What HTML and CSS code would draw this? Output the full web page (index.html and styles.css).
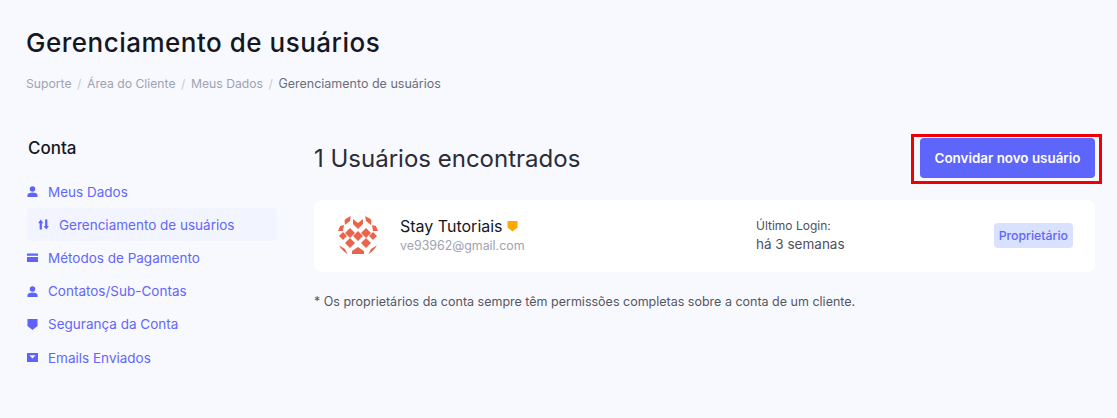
FILE: index.html
```html
<!DOCTYPE html>
<html lang="pt-BR">
<head>
    <meta charset="UTF-8">
    <meta name="viewport" content="width=device-width, initial-scale=1.0">
    <title>Gerenciamento de usuários</title>
    <link rel="stylesheet" href="styles.css">
</head>
<body>
    <!-- Page title and breadcrumb -->
    <header class="page-header">
        <h1>Gerenciamento de usuários</h1>
        <nav class="breadcrumb">
            <a href="#">Suporte</a><span class="sep">/</span>
            <a href="#">Área do Cliente</a><span class="sep">/</span>
            <a href="#">Meus Dados</a><span class="sep">/</span>
            <span class="current">Gerenciamento de usuários</span>
        </nav>
    </header>

    <div class="layout">
        <!-- Sidebar -->
        <aside class="sidebar">
            <h2>Conta</h2>
            <ul class="side-menu">
                <li>
                    <a href="#">
                        <svg class="icon" viewBox="0 0 12 12"><circle cx="6" cy="3.2" r="3"/><path d="M0.5 12V9.8C0.5 8 3 7 6 7s5.5 1 5.5 2.8V12z"/></svg>
                        Meus Dados
                    </a>
                </li>
                <li class="active">
                    <a href="#">
                        <svg class="icon" viewBox="0 0 12 12"><path d="M3 0.5 5.9 4.5H4.2v7H1.8v-7H0.1zM9 11.5 6.1 7.5h1.7v-7h2.4v7h1.7z"/></svg>
                        Gerenciamento de usuários
                    </a>
                </li>
                <li>
                    <a href="#">
                        <svg class="icon" viewBox="0 0 12 12"><path d="M0 1.5h12V4H0zM0 5.5h12V11H0z"/></svg>
                        Métodos de Pagamento
                    </a>
                </li>
                <li>
                    <a href="#">
                        <svg class="icon" viewBox="0 0 12 12"><circle cx="6" cy="3.2" r="3"/><path d="M0.5 12V9.8C0.5 8 3 7 6 7s5.5 1 5.5 2.8V12z"/></svg>
                        Contatos/Sub-Contas
                    </a>
                </li>
                <li>
                    <a href="#">
                        <svg class="icon" viewBox="0 0 12 12"><path d="M0.5 0h11v7.5L6 12 0.5 7.5z"/></svg>
                        Segurança da Conta
                    </a>
                </li>
                <li>
                    <a href="#">
                        <svg class="icon" viewBox="0 0 12 12"><path fill-rule="evenodd" d="M0 1h12v10H0zM2.5 3.5 6 7l3.5-3.5z"/></svg>
                        Emails Enviados
                    </a>
                </li>
            </ul>
        </aside>

        <!-- Users -->
        <main class="content">
            <div class="content-top">
                <h2>1 Usuários encontrados</h2>
                <div class="invite">
                    <button type="button">Convidar novo usuário</button>
                    <span class="highlight"></span>
                </div>
            </div>

            <div class="user-card">
                <svg class="avatar" viewBox="0 0 42 42">
                    <defs><clipPath id="avatarClip"><circle cx="21" cy="21" r="21"/></clipPath></defs>
                    <g clip-path="url(#avatarClip)">
                        <!-- checker of diamonds -->
                        <path d="M21 16 26 21 21 26 16 21z"/>
                        <path d="M13 13 18 18 13 23 8 18z"/>
                        <path d="M29 13 34 18 29 23 24 18z"/>
                        <path d="M13 23 18 28 13 33 8 28z"/>
                        <path d="M29 23 34 28 29 33 24 28z"/>
                        <path d="M6 17 10 21 6 25 2 21z"/>
                        <path d="M36 17 40 21 36 25 32 21z"/>
                        <!-- top crown -->
                        <path d="M16 4 21 8 26 4 26 9 21 14 16 9z"/>
                        <!-- upper wedges -->
                        <path d="M7 0H14L13 6 8 10z"/>
                        <path d="M35 0H28L29 6 34 10z"/>
                        <path d="M3 11 7 10 6 16 1 16z"/>
                        <path d="M39 11 35 10 36 16 41 16z"/>
                        <!-- bottom -->
                        <path d="M15 36 21 32 27 36 27 39H15z"/>
                        <path d="M0 29 8 34 12 42H3z"/>
                        <path d="M42 29 34 34 30 42H39z"/>
                    </g>
                </svg>
                <div class="user-info">
                    <div class="user-name">
                        Stay Tutoriais
                        <svg class="badge-icon" viewBox="0 0 12 12"><path d="M0.5 0.5h11v7L6 12 0.5 7.5z"/></svg>
                    </div>
                    <div class="user-email">ve93962@gmail.com</div>
                </div>
                <div class="user-login">
                    <div class="login-label">Último Login:</div>
                    <div class="login-value">há 3 semanas</div>
                </div>
                <span class="role">Proprietário</span>
            </div>

            <p class="note">* Os proprietários da conta sempre têm permissões completas sobre a conta de um cliente.</p>
        </main>
    </div>
</body>
</html>
```

FILE: styles.css
```css
/* General Reset */
* {
    margin: 0;
    padding: 0;
    box-sizing: border-box;
}
body {
    font-family: Inter, "Noto Sans", Arial, sans-serif;
    background-color: #f8f9ff;
    color: #14142b;
    height: 418px;
    overflow: hidden;
}
a, a:visited {
    color: inherit;
    text-decoration: none;
}
/* Page header */
.page-header {
    padding: 26px 0 0 26px;
}
.page-header h1 {
    font-size: 26px;
    line-height: 34px;
    font-weight: 500;
    letter-spacing: 0.5px;
    color: #15171f;
}
.breadcrumb {
    margin-top: 15px;
    font-size: 12.2px;
    line-height: 18px;
    color: #a0a3af;
    display: flex;
}
.breadcrumb .sep {
    margin: 0 5.5px;
    color: #c8cad2;
}
.breadcrumb .current {
    font-size: 12.5px;
    color: #6b6e78;
}
/* Layout */
.layout {
    display: flex;
    padding: 0 22px 0 27px;
    margin-top: 35px;
}
/* Sidebar */
.sidebar {
    width: 250px;
    flex-shrink: 0;
    padding-top: 8px;
}
.sidebar h2 {
    font-size: 17px;
    line-height: 24px;
    font-weight: 500;
    color: #15171f;
    margin-left: 1px;
    margin-bottom: 15px;
}
.side-menu {
    list-style: none;
}
.side-menu li {
    height: 33.2px;
}
.side-menu li a {
    display: flex;
    align-items: center;
    gap: 10px;
    height: 100%;
    font-size: 13.5px;
    color: #6366fb;
}
.side-menu li.active {
    background-color: #f2f5ff;
    border-radius: 4px;
    padding-left: 11px;
}
.icon {
    width: 11px;
    height: 11px;
    fill: #5f63fb;
    flex-shrink: 0;
}
/* Content */
.content {
    flex: 1;
    margin-left: 37px;
    padding-top: 10px;
}
.content-top {
    display: flex;
    justify-content: space-between;
    align-items: center;
    height: 40px;
}
.content-top h2 {
    font-size: 24px;
    font-weight: 400;
    color: #2a2c36;
}
.invite {
    position: relative;
}
.invite button {
    display: block;
    width: 175px;
    height: 40px;
    background-color: #5d65fb;
    border: none;
    border-radius: 4px;
    color: #fff;
    font-family: inherit;
    font-size: 13.4px;
    font-weight: 600;
    cursor: pointer;
}
/* Red box around the button */
.highlight {
    position: absolute;
    top: -4px;
    left: -9px;
    width: 191px;
    height: 50px;
    border: 3px solid #f00000;
    pointer-events: none;
}
/* User card */
.user-card {
    display: flex;
    align-items: center;
    height: 72px;
    margin-top: 22px;
    padding: 0 22px 0 23px;
    background-color: #fff;
    border-radius: 8px;
}
.avatar {
    width: 42px;
    height: 42px;
    fill: #e8644a;
    flex-shrink: 0;
}
.user-info {
    margin-left: 21px;
    width: 356px;
    padding-bottom: 3px;
}
.user-name {
    display: flex;
    align-items: center;
    gap: 4px;
    font-size: 16px;
    line-height: 22px;
    color: #15171f;
}
.badge-icon {
    width: 11px;
    height: 12px;
    fill: #ffa800;
}
.user-email {
    font-size: 12.4px;
    line-height: 18px;
    color: #a0a3af;
}
.user-login {
    flex: 1;
    line-height: 19px;
    padding-bottom: 2px;
    color: #4e505c;
}
.login-label {
    font-size: 12px;
}
.login-value {
    font-size: 13.5px;
}
.role {
    background-color: #d8e2ff;
    color: #6366fb;
    border-radius: 4px;
    font-size: 12.3px;
    line-height: 25px;
    padding: 0 5px;
    margin-bottom: 1px;
    font-weight: 500;
}
.note {
    margin-top: 21px;
    font-size: 12.5px;
    line-height: 18px;
    color: #55575f;
}
```
